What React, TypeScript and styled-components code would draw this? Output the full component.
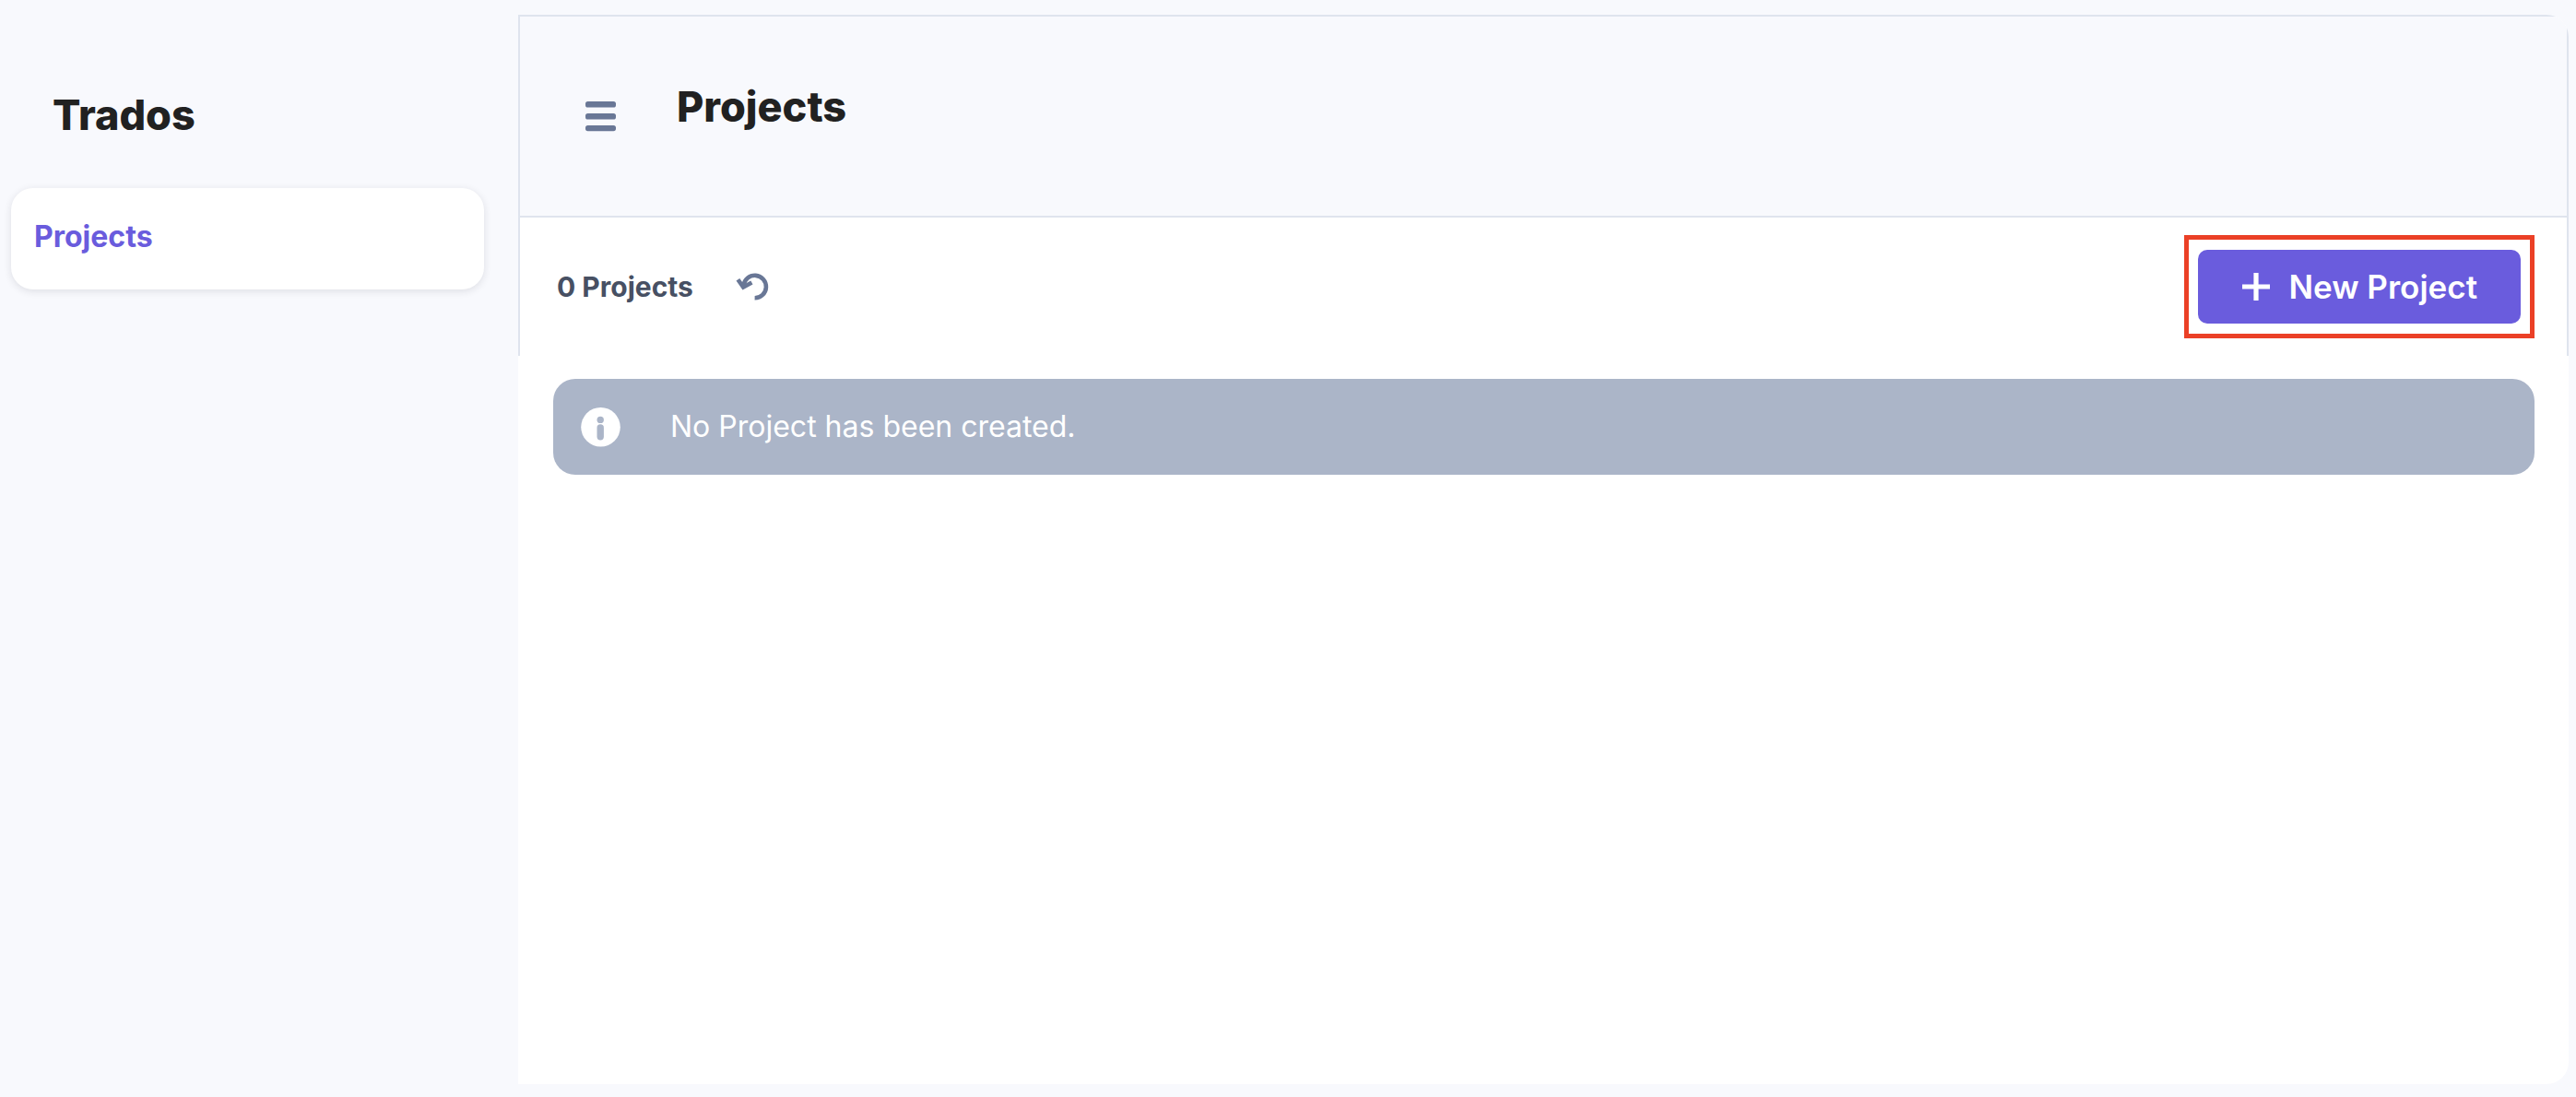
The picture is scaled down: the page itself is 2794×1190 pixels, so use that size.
import React from 'react';
import styled, { createGlobalStyle } from 'styled-components';

const color = {
  page: '#f8f9fd',
  surface: '#ffffff',
  line: '#dfe4ee',
  ink: '#212121',
  label: '#475063',
  icon: '#697796',
  accent: '#6a5cdd',
  info: '#abb5c8',
  highlight: '#eb4026',
};

const GlobalStyle = createGlobalStyle`
  *, *::before, *::after { box-sizing: border-box; }
  body {
    margin: 0;
    background: ${color.page};
    font-family: Inter, "Liberation Sans", sans-serif;
  }
`;

const Shell = styled.div`
  display: grid;
  grid-template-columns: 562px minmax(0, 1fr);
  min-height: 100vh;
`;

const Sidebar = styled.aside`
  display: flex;
  flex-direction: column;
  padding: 97px 37px 0 12px;
`;

const Brand = styled.div`
  padding-left: 45px;
  margin-bottom: 51px;
  font-size: 45px;
  line-height: 56px;
  font-weight: 800;
  color: ${color.ink};
`;

const NavLink = styled.a`
  display: block;
  padding: 33px 25px 37px;
  border-radius: 24px;
  background: ${color.surface};
  box-shadow: 0 2px 8px rgba(30, 30, 50, 0.12);
  font-size: 32px;
  line-height: 40px;
  font-weight: 700;
  color: ${color.accent};
  text-decoration: none;
`;

const Main = styled.main`
  display: flex;
  flex-direction: column;
  margin: 16px 8px 14px 0;
  border-radius: 0 24px 24px 0;
  background: ${color.surface};
  overflow: hidden;
`;

const Header = styled.header`
  display: flex;
  align-items: flex-start;
  gap: 50px;
  padding: 70px 56px 76px;
  border: 2px solid ${color.line};
  background: ${color.page};
`;

const Title = styled.h1`
  margin: 0;
  font-size: 45px;
  line-height: 56px;
  font-weight: 800;
  color: ${color.ink};
`;

const IconButton = styled.button`
  display: flex;
  align-items: center;
  justify-content: center;
  width: 64px;
  height: 64px;
  padding: 0;
  border: 0;
  background: none;
  color: ${color.icon};
  cursor: pointer;
`;

const MenuButton = styled(IconButton)`
  margin-top: 6px;
`;

const Toolbar = styled.div`
  display: flex;
  align-items: center;
  justify-content: space-between;
  padding: 19px 35px 19px 40px;
  border: solid ${color.line};
  border-width: 0 2px;
`;

const CountGroup = styled.div`
  display: flex;
  align-items: center;
  gap: 32px;
`;

const Count = styled.span`
  font-size: 30px;
  line-height: 40px;
  font-weight: 700;
  color: ${color.label};
`;

const Highlight = styled.div`
  padding: 11px 10px;
  border: 5px solid ${color.highlight};
`;

const PrimaryButton = styled.button`
  display: flex;
  align-items: center;
  gap: 19px;
  height: 80px;
  padding: 0 47px;
  border: 0;
  border-radius: 10px;
  background: ${color.accent};
  font-family: inherit;
  font-size: 35px;
  line-height: 44px;
  font-weight: 600;
  color: ${color.surface};
  cursor: pointer;
`;

const Notice = styled.div`
  display: flex;
  align-items: center;
  gap: 54px;
  min-height: 104px;
  margin: 25px 37px 0 38px;
  padding: 0 30px;
  border-radius: 24px;
  background: ${color.info};
  font-size: 32px;
  line-height: 40px;
  color: ${color.surface};
`;

const MenuIcon = () => (
  <svg width="34" height="34" viewBox="0 0 34 34" fill="currentColor" aria-hidden="true">
    <rect x="0" y="1" width="33" height="6.5" rx="2.6" />
    <rect x="0" y="14" width="33" height="6.5" rx="2.6" />
    <rect x="0" y="27" width="33" height="6.2" rx="2.6" />
  </svg>
);

const RefreshIcon = () => (
  <svg width="36" height="32" viewBox="0 0 36 32" fill="none" stroke="currentColor" strokeWidth="4.6" aria-hidden="true">
    <path d="M8.6 14.6A12.2 12.2 0 1 1 20.6 28.2" />
    <path d="M2.4 8.2L8.2 16.6L17.4 11.6" />
  </svg>
);

const PlusIcon = () => (
  <svg width="32" height="32" viewBox="0 0 32 32" fill="currentColor" aria-hidden="true">
    <path d="M13.4 1h5.2v12.4H31v5.2H18.6V31h-5.2V18.6H1v-5.2h12.4z" />
  </svg>
);

const InfoIcon = () => (
  <svg width="43" height="43" viewBox="0 0 43 43" aria-hidden="true">
    <circle cx="21.5" cy="21.3" r="21.3" fill={color.surface} />
    <circle cx="21.2" cy="13.4" r="3.7" fill={color.info} />
    <rect x="17.5" y="18.2" width="7.4" height="17.2" rx="3.7" fill={color.info} />
  </svg>
);

export default function App() {
  return (
    <>
      <GlobalStyle />
      <Shell>
        <Sidebar>
          <Brand>Trados</Brand>
          <nav>
            <NavLink href="#projects" aria-current="page">Projects</NavLink>
          </nav>
        </Sidebar>
        <Main>
          <Header>
            <MenuButton type="button" aria-label="Toggle menu">
              <MenuIcon />
            </MenuButton>
            <Title>Projects</Title>
          </Header>
          <Toolbar>
            <CountGroup>
              <Count>0 Projects</Count>
              <IconButton type="button" aria-label="Refresh">
                <RefreshIcon />
              </IconButton>
            </CountGroup>
            <Highlight>
              <PrimaryButton type="button">
                <PlusIcon />
                New Project
              </PrimaryButton>
            </Highlight>
          </Toolbar>
          <Notice role="status">
            <InfoIcon />
            No Project has been created.
          </Notice>
        </Main>
      </Shell>
    </>
  );
}
